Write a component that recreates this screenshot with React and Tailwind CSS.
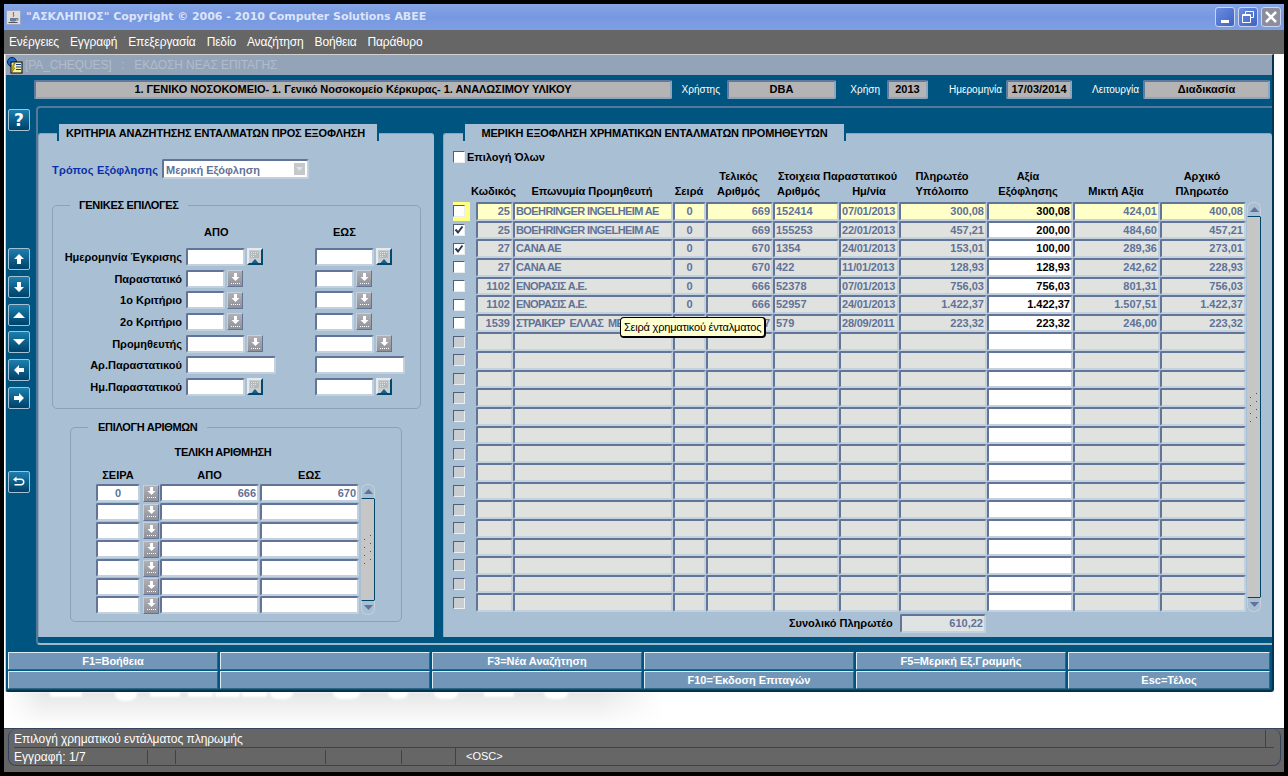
import React from 'react';

const greek = { fontFamily: '"Liberation Sans", "DejaVu Sans", sans-serif' };

const rows = [
  ['25', 'BOEHRINGER INGELHEIM AE', '0', '669', '152414', '07/01/2013', '300,08', '300,08', '424,01', '400,08'],
  ['25', 'BOEHRINGER INGELHEIM AE', '0', '669', '155253', '22/01/2013', '457,21', '200,00', '484,60', '457,21'],
  ['27', 'CANA AE', '0', '670', '1354', '24/01/2013', '153,01', '100,00', '289,36', '273,01'],
  ['27', 'CANA AE', '0', '670', '422', '11/01/2013', '128,93', '128,93', '242,62', '228,93'],
  ['1102', 'ΕΝΟΡΑΣΙΣ Α.Ε.', '0', '666', '52378', '07/01/2013', '756,03', '756,03', '801,31', '756,03'],
  ['1102', 'ΕΝΟΡΑΣΙΣ Α.Ε.', '0', '666', '52957', '24/01/2013', '1.422,37', '1.422,37', '1.507,51', '1.422,37'],
  ['1539', 'ΣΤΡΑΙΚΕΡ  ΕΛΛΑΣ  ΜΕΠΕ', '0', '667', '579', '28/09/2011', '223,32', '223,32', '246,00', '223,32'],
];

const colWidths = ['w-[37px]', 'w-[160px] tracking-[-0.6px]', 'w-[33px]', 'w-[67px]', 'w-[66px]', 'w-[60px] tracking-[-0.2px]', 'w-[88px]', 'w-[86px]', 'w-[87px]', 'w-[86px]'];
const colAlign = ['text-right', 'text-left', 'text-center', 'text-right', 'text-left', 'text-left', 'text-right', 'text-right', 'text-right', 'text-right'];

function Field({ className = '', children, align = 'text-right', bg = 'bg-white', color = 'text-[#5f7298]' }) {
  return (
    <div className={`shrink-0 overflow-hidden whitespace-pre rounded-[2px] border-2 border-t-[#627599] border-l-[#627599] border-r-[#c3d0de] border-b-[#c3d0de] px-[1px] text-[11px] font-bold leading-[14px] ${bg} ${color} ${align} ${className}`}>
      {children}
    </div>
  );
}

function SideButton({ children, className = '' }) {
  return (
    <div className={`flex h-[22px] w-[22px] items-center justify-center rounded-[2px] border border-[#a8c0d4] bg-gradient-to-b from-[#1d7fae] to-[#00426a] ${className}`}>
      {children}
    </div>
  );
}

function SideIcon({ children }) {
  return <svg width="14" height="14" viewBox="0 0 14 14" fill="#fff">{children}</svg>;
}

function ListButton({ className = '' }) {
  return (
    <div className={`flex h-[17px] w-[16px] shrink-0 flex-col items-center justify-center border border-t-[#c3d0de] border-l-[#c3d0de] border-r-[#627599] border-b-[#627599] bg-gradient-to-b from-[#b0b0b6] to-[#909098] ${className}`}>
      <svg width="11" height="12" viewBox="0 0 11 12" fill="#fff">
        <path d="M4 0h3v4h2.500L5.500 8 1.500 4H4z" />
        <path d="M1 10h1v1H1zM3 10h1v1H3zM5 10h1v1H5zM7 10h1v1H7zM9 10h1v1H9z" />
      </svg>
    </div>
  );
}

function CalButton({ className = '' }) {
  return (
    <div className={`flex h-[17px] w-[16px] shrink-0 items-center justify-center overflow-hidden border-2 border-t-[#e4eaf0] border-l-[#e4eaf0] border-r-[#004a70] border-b-[#004a70] bg-[#c9cfd0] ${className}`}>
      <svg width="12" height="13" viewBox="0 0 12 13">
        <rect x="1" y="1" width="9" height="7" fill="#b4babc" />
        <path d="M2 2h1v1H2zM4 2h1v1H4zM6 2h1v1H6zM8 2h1v1H8zM2 4h1v1H2zM4 4h1v1H4zM6 4h1v1H6zM2 6h1v1H2zM4 6h1v1H4z" fill="#dfe3e4" />
        <path d="M2.500 13 L6 9 L9.500 13z" fill="#1d5f86" />
      </svg>
    </div>
  );
}

function Check({ checked, disabled, highlight }) {
  return (
    <div className={`flex h-full w-[17px] shrink-0 items-center justify-start ${highlight ? 'bg-[#ffff80]' : ''}`}>
      <div className={`flex h-[12px] w-[12px] items-center justify-center border border-t-[#51607a] border-l-[#51607a] border-r-[#e8eef2] border-b-[#e8eef2] ${disabled ? 'bg-[#c9cdd0]' : 'bg-white'}`}>
        {checked && (
          <svg width="10" height="10" viewBox="0 0 10 10">
            <path d="M1.500 4.500 L4 7.500 L8.500 1.500" fill="none" stroke="#2a3a55" strokeWidth="2" />
          </svg>
        )}
      </div>
    </div>
  );
}

function GroupBox({ title, titleClass = '', className = '', children }) {
  return (
    <div className={`relative rounded-[5px] border border-[#8ca2b8] ${className}`}>
      <div className={`absolute top-[-8px] whitespace-nowrap bg-[#a9bfd3] text-[11px] font-bold leading-[14px] tracking-[-0.3px] text-black ${titleClass}`}>{title}</div>
      {children}
    </div>
  );
}

function TabPanel({ title, tabClass, className = '', children }) {
  return (
    <div className={`relative rounded-t-[3px] border-t border-l border-[#8fa6ba] bg-[#a9bfd3] ${className}`}>
      <div className={`absolute top-[-10px] flex h-[17px] items-center whitespace-nowrap border-x-2 border-[#005580] bg-[#a9bfd3] pt-[1px] text-[11px] font-bold tracking-[-0.15px] text-black ${tabClass}`}>
        {title}
      </div>
      {children}
    </div>
  );
}

function FilterRow({ label, first, second }) {
  return (
    <div className="flex h-[21.700px] items-center">
      <div className="w-[133px] shrink-0 whitespace-nowrap pr-[4px] text-right text-[11px] font-bold leading-[14px] text-black">{label}</div>
      <div className="flex w-[129px] shrink-0 items-center gap-[2px]">{first}</div>
      <div className="flex items-center gap-[2px]">{second}</div>
    </div>
  );
}

function Scrollbar({ className = '' }) {
  return (
    <div className={`flex shrink-0 flex-col overflow-hidden rounded-[6px] bg-[#c6c6c6] ${className}`}>
      <div className="flex h-[15px] items-center justify-center rounded-t-[6px] border border-b-[#00466b] border-[#c3d0de] bg-[#a9bfd3]">
        <svg width="9" height="5" viewBox="0 0 9 5"><path d="M4.500 0 L9 5 H0z" fill="#5f7298" /></svg>
      </div>
      <div className="flex flex-1 flex-col items-center justify-center gap-[3px] border-r border-[#00466b]">
        {[0, 1, 2, 3].map((i) => (
          <svg key={i} width="8" height="5" viewBox="0 0 8 5"><path d="M0 4h1v1H0zM6 0h1v1H6z" fill="#3f5070" /></svg>
        ))}
      </div>
      <div className="flex h-[15px] items-center justify-center rounded-b-[6px] border border-t-[#00466b] border-[#c3d0de] bg-[#a9bfd3]">
        <svg width="9" height="5" viewBox="0 0 9 5"><path d="M4.500 5 L9 0 H0z" fill="#5f7298" /></svg>
      </div>
    </div>
  );
}

function HeaderCell({ className = '', children }) {
  return <div className={`shrink-0 text-center text-[11px] font-bold leading-[15px] text-black ${className}`}>{children}</div>;
}

function BottomButton({ children }) {
  return (
    <div className="flex h-[18px] items-center justify-center rounded-[1px] border border-t-[#e2ecf4] border-l-[#e2ecf4] border-r-[#2f6486] border-b-[#2f6486] bg-[#7196b8] text-[11px] font-bold text-white">
      {children}
    </div>
  );
}

function TopInfo({ label, value, width, labelWidth, gap }) {
  return (
    <div className="flex items-center">
      <div className={`text-right text-[10px] leading-[14px] text-white ${labelWidth}`}>{label}</div>
      <div className={`flex h-[19px] items-center justify-center rounded-[2px] border-2 border-t-[#5f7a9c] border-l-[#5f7a9c] border-r-[#8da6bf] border-b-[#8da6bf] bg-[#b4b4b4] text-[11px] font-bold text-black ${gap} ${width}`}>{value}</div>
    </div>
  );
}

function Ghost() {
  // faded logo reflection under the form
  return (
    <svg className="blur-[1px]" width="660" height="36" viewBox="0 0 660 36">
      <defs>
        <linearGradient id="ghost" x1="0" y1="0" x2="0" y2="1">
          <stop offset="0" stopColor="#e6e6e6" />
          <stop offset="1" stopColor="#ffffff" />
        </linearGradient>
        <linearGradient id="fade" x1="0" y1="0" x2="1" y2="0">
          <stop offset="0" stopColor="#fff" stopOpacity="1" />
          <stop offset="0.06" stopColor="#fff" stopOpacity="0" />
          <stop offset="0.9" stopColor="#fff" stopOpacity="0" />
          <stop offset="1" stopColor="#fff" stopOpacity="1" />
        </linearGradient>
      </defs>
      <rect width="660" height="36" fill="url(#ghost)" />
      <rect width="660" height="36" fill="url(#fade)" />
      <g fill="#fff">
        <rect x="46" y="-4" width="32" height="9" rx="2" />
        <rect x="111" y="-4" width="22" height="13" rx="10" />
        <rect x="146" y="-4" width="30" height="9" rx="2" />
        <rect x="184" y="-4" width="25" height="9" rx="2" />
        <rect x="211" y="-4" width="25" height="9" rx="2" />
        <rect x="238" y="-4" width="25" height="9" rx="2" />
        <rect x="266" y="-4" width="23" height="11" rx="10" />
        <rect x="329" y="-4" width="27" height="11" rx="10" />
        <rect x="384" y="-4" width="20" height="11" rx="10" />
        <rect x="430" y="-4" width="24" height="11" rx="10" />
        <rect x="480" y="-4" width="30" height="9" rx="2" />
        <rect x="540" y="-4" width="24" height="11" rx="10" />
      </g>
    </svg>
  );
}

export default function App() {
  const filters = [
    ['Ημερομηνία Έγκρισης', 'w-[59px]', 'cal', 'w-[59px]'],
    ['Παραστατικό', 'w-[39px]', 'list', 'w-[39px]'],
    ['1ο Κριτήριο', 'w-[39px]', 'list', 'w-[39px]'],
    ['2ο Κριτήριο', 'w-[39px]', 'list', 'w-[39px]'],
    ['Προμηθευτής', 'w-[59px]', 'list', 'w-[59px]'],
    ['Αρ.Παραστατικού', 'w-[90px]', null, 'w-[90px]'],
    ['Ημ.Παραστατικού', 'w-[59px]', 'cal', 'w-[59px]'],
  ];

  return (
    <div className="flex h-[776px] w-[1288px] flex-col overflow-hidden bg-black py-[4px] px-[4px] text-[11px]" style={greek}>
      {/* title bar */}
      <div className="flex h-[26px] shrink-0 items-center bg-gradient-to-b from-[#86a5e6] via-[#7797e0] to-[#7f9fe4] pl-[2px] pr-[3px]">
        <div className="flex h-[15px] w-[15px] items-center justify-center border border-[#9aa8c8] bg-[#dcdcdc]">
          <svg width="13" height="13" viewBox="0 0 13 13">
            <path d="M3 7h6v2.500l-1 1H4l-1-1z" fill="#6a7a9a" />
            <path d="M9 7.500h2v1.500H9" fill="none" stroke="#6a7a9a" />
            <path d="M6 1c1.500 1-.5 2 .5 3s-.5 1.500-.5 2" fill="none" stroke="#b03020" />
            <path d="M1.500 11.500h9" stroke="#555" />
          </svg>
        </div>
        <div className="ml-[5px] whitespace-nowrap text-[11px] font-bold tracking-[-0.05px] text-[#dbe5f8]" style={{ fontFamily: '"DejaVu Sans", sans-serif' }}>
          "ΑΣΚΛΗΠΙΟΣ" Copyright © 2006 - 2010 Computer Solutions ABEE
        </div>
        <div className="ml-auto flex gap-[3px]">
          <div className="flex h-[20px] w-[20px] items-end justify-center rounded-[3px] border border-[#c8d6f0] bg-gradient-to-br from-[#6c8ee0] to-[#3f62c4] pb-[3px]"><div className="h-[3px] w-[8px] bg-white" /></div>
          <div className="flex h-[20px] w-[20px] items-center justify-center rounded-[3px] border border-[#c8d6f0] bg-gradient-to-br from-[#6c8ee0] to-[#3f62c4]">
            <svg width="12" height="12" viewBox="0 0 12 12" fill="none" stroke="#fff"><path d="M3.500 3V.5h8v6H9M.5 3.500h8v8h-8z" /><path d="M1 4h7" strokeWidth="2" /></svg>
          </div>
          <div className="flex h-[20px] w-[20px] items-center justify-center rounded-[3px] border border-[#c8d6f0] bg-[#8d8d9c]">
            <svg width="12" height="12" viewBox="0 0 12 12"><path d="M1 1l10 10M11 1L1 11" stroke="#fff" strokeWidth="2.500" /></svg>
          </div>
        </div>
      </div>
      {/* menu */}
      <div className="flex h-[24px] shrink-0 items-center gap-[11px] bg-[#666666] pl-[5px] text-[12px] tracking-[-0.15px] text-white">
        {['Ενέργειες', 'Εγγραφή', 'Επεξεργασία', 'Πεδίο', 'Αναζήτηση', 'Βοήθεια', 'Παράθυρο'].map((m) => (
          <span key={m}>{m}</span>
        ))}
      </div>
      {/* client area */}
      <div className="flex min-h-0 flex-1 flex-col bg-white">
        <div className="ml-[1px] flex h-[638px] w-[1269px] shrink-0 flex-col overflow-hidden rounded-b-[3px] border-t border-r-2 border-b-2 border-l border-t-[#d0d0d0] border-r-[#00344f] border-b-[#00344f] border-l-[#c0d0dc] bg-[#005580]">
          {/* inner title */}
          <div className="flex h-[20px] shrink-0 items-center bg-[#94a4b8] text-[12px] tracking-[-0.1px] text-[#b0bccc]">
            <svg width="17" height="17" viewBox="0 0 17 17">
              <circle cx="6" cy="5" r="4.500" fill="#1a6ad0" stroke="#0a2050" />
              <rect x="5" y="5" width="11" height="11" fill="#f4f0a0" stroke="#000" />
              <path d="M10 7.500h5M10 10h5M10 12.500h5" stroke="#1a3a90" />
              <path d="M8 6l1 0-2 5 2 0-3 4 1-3-2 0z" fill="#d8c020" stroke="#5a5000" strokeWidth="0.500" />
            </svg>
            <span className="ml-[2px] whitespace-pre">[PA_CHEQUES]   :   ΕΚΔΟΣΗ ΝΕΑΣ ΕΠΙΤΑΓΗΣ</span>
          </div>
          {/* info strip */}
          <div className="flex h-[31px] shrink-0 items-start pt-[5px] pl-[28px]">
            <div className="flex h-[19px] w-[638px] items-center justify-center rounded-[2px] border-2 border-t-[#5f7a9c] border-l-[#5f7a9c] border-r-[#8da6bf] border-b-[#8da6bf] bg-[#b4b4b4] text-[11px] font-bold tracking-[-0.05px] text-black">
              1. ΓΕΝΙΚΟ ΝΟΣΟΚΟΜΕΙΟ- 1. Γενικό Νοσοκομείο Κέρκυρας- 1. ΑΝΑΛΩΣΙΜΟΥ ΥΛΙΚΟΥ
            </div>
            <TopInfo label="Χρήστης" value="DBA" labelWidth="w-[48px]" gap="ml-[7px]" width="w-[109px]" />
            <TopInfo label="Χρήση" value="2013" labelWidth="w-[44px]" gap="ml-[7px]" width="w-[41px]" />
            <TopInfo label="Ημερομηνία" value="17/03/2014" labelWidth="w-[74px]" gap="ml-[4px]" width="w-[66px]" />
            <TopInfo label="Λειτουργία" value="Διαδικασία" labelWidth="w-[67px]" gap="ml-[4px]" width="w-[127px]" />
          </div>
          {/* work area */}
          <div className="flex min-h-0 flex-1">
            <div className="flex w-[30px] shrink-0 flex-col items-start pt-[3px] pl-[2px]">
              <SideButton><span className="text-[17px] font-bold leading-none text-white" style={{ fontFamily: '"DejaVu Sans", sans-serif' }}>?</span></SideButton>
              <SideButton className="mt-[117px]"><SideIcon><path d="M7 2l5 5H9v5H5V7H2z" /></SideIcon></SideButton>
              <SideButton className="mt-[6px]"><SideIcon><path d="M5 2h4v5h3l-5 5-5-5h3z" /></SideIcon></SideButton>
              <SideButton className="mt-[6px]"><SideIcon><path d="M7 4l6 6H1z" /></SideIcon></SideButton>
              <SideButton className="mt-[5px]"><SideIcon><path d="M1 4h12l-6 6z" /></SideIcon></SideButton>
              <SideButton className="mt-[6px]"><SideIcon><path d="M2 7l5-5v3h5v4H7v3z" /></SideIcon></SideButton>
              <SideButton className="mt-[6px]"><SideIcon><path d="M12 7L7 2v3H2v4h5v3z" /></SideIcon></SideButton>
              <SideButton className="mt-[62px]"><SideIcon><path d="M1 4.500L4.500 1.500V3.500H9c2 0 3.500 1.500 3.500 3.500S11 10.500 9 10.500H2.500V9H9c1.200 0 2-.9 2-2s-.8-2-2-2H4.500V7z" /></SideIcon></SideButton>
            </div>
            <div className="flex min-w-0 flex-1 gap-[9px] rounded-l-[4px] border-t-2 border-b-2 border-l-2 border-t-[#56789a] border-b-[#a3b6c6] border-l-[#56789a] pt-[25px] pb-[6px]">
              {/* left panel */}
              <TabPanel title="ΚΡΙΤΗΡΙΑ ΑΝΑΖΗΤΗΣΗΣ ΕΝΤΑΛΜΑΤΩΝ ΠΡΟΣ ΕΞΟΦΛΗΣΗ" tabClass="left-[18px] w-[322px] pl-[7px]" className="h-[504px] w-[396px] shrink-0">
                <div className="flex items-center pt-[25px] pl-[13px]">
                  <span className="pt-[1px] text-[11px] font-bold leading-[14px] tracking-[0.2px] text-[#0a2fa8]">Τρόπος Εξόφλησης</span>
                  <Field className="ml-[4px] flex h-[20px] w-[147px] items-center justify-between pr-[2px] pl-[2px]" align="text-left">
                    <span className="pt-[1px]">Μερική Εξόφληση</span>
                    <span className="flex h-[12px] w-[11px] items-center justify-center bg-[#c4c8cc]">
                      <svg width="7" height="4" viewBox="0 0 7 4"><path d="M0 0h7L3.500 4z" fill="#dfe3e6" /></svg>
                    </span>
                  </Field>
                </div>
                <GroupBox title="ΓΕΝΙΚΕΣ ΕΠΙΛΟΓΕΣ" titleClass="left-[17px] px-[9px]" className="mt-[26px] ml-[13px] h-[204px] w-[369px]">
                  <div className="flex pt-[19px] text-[11px] font-bold leading-[14px] text-black">
                    <div className="w-[133px]" />
                    <div className="w-[129px] pl-[18px]">ΑΠΟ</div>
                    <div className="pl-[18px]">ΕΩΣ</div>
                  </div>
                  <div className="mt-[7px] flex flex-col">
                    {filters.map(([label, w, btn, w2]) => (
                      <FilterRow
                        key={label}
                        label={label}
                        first={<><Field className={`h-[18px] ${w}`} />{btn === 'cal' && <CalButton />}{btn === 'list' && <ListButton />}</>}
                        second={<><Field className={`h-[18px] ${w2}`} />{btn === 'cal' && <CalButton />}{btn === 'list' && <ListButton />}</>}
                      />
                    ))}
                  </div>
                </GroupBox>
                <GroupBox title="ΕΠΙΛΟΓΗ ΑΡΙΘΜΩΝ" titleClass="left-[17px] px-[10px]" className="mt-[18px] ml-[31px] h-[195px] w-[332px]">
                  <div className="pt-[17px] pr-[26px] text-center text-[11px] font-bold leading-[14px] tracking-[-0.3px] text-black">ΤΕΛΙΚΗ ΑΡΙΘΜΗΣΗ</div>
                  <div className="mt-[9px] flex pl-[25px] text-center text-[11px] font-bold leading-[14px] text-black">
                    <div className="w-[44px]">ΣΕΙΡΑ</div>
                    <div className="ml-[20px] w-[99px]">ΑΠΟ</div>
                    <div className="ml-[1px] w-[99px]">ΕΩΣ</div>
                  </div>
                  <div className="mt-[2px] flex pl-[25px]">
                    <div className="flex flex-col">
                      {[0, 1, 2, 3, 4, 5, 6].map((i) => (
                        <div key={i} className="flex h-[18.700px] items-center">
                          <Field className="h-[18px] w-[44px]" align="text-center">{i === 0 ? '0' : ''}</Field>
                          <ListButton className="ml-[3px]" />
                          <Field className="ml-[1px] h-[18px] w-[99px]">{i === 0 ? '666' : ''}</Field>
                          <Field className="ml-[1px] h-[18px] w-[99px]">{i === 0 ? '670' : ''}</Field>
                        </div>
                      ))}
                    </div>
                    <Scrollbar className="ml-[2px] w-[14px]" />
                  </div>
                </GroupBox>
              </TabPanel>
              {/* right panel */}
              <TabPanel title="ΜΕΡΙΚΗ ΕΞΟΦΛΗΣΗ ΧΡΗΜΑΤΙΚΩΝ ΕΝΤΑΛΜΑΤΩΝ ΠΡΟΜΗΘΕΥΤΩΝ" tabClass="left-[19px] w-[383px] justify-center" className="h-[504px] w-[829px] shrink-0">
                <div className="flex items-center pt-[16px] pl-[9px] text-[11px] font-bold leading-[14px] text-black">
                  <div className="h-[12px] w-[12px] border border-t-[#51607a] border-l-[#51607a] border-r-[#e8eef2] border-b-[#e8eef2] bg-white" />
                  <span className="ml-[2px]">Επιλογή Όλων</span>
                </div>
                {/* grid header */}
                <div className="mt-[5px] flex h-[30px] items-end pl-[27px]">
                  <HeaderCell className="w-[45px]">Κωδικός</HeaderCell>
                  <HeaderCell className="w-[152px]">Επωνυμία Προμηθευτή</HeaderCell>
                  <HeaderCell className="w-[42px]">Σειρά</HeaderCell>
                  <HeaderCell className="w-[57px]">Τελικός<br />Αριθμός</HeaderCell>
                  <div className="flex w-[141px] shrink-0 flex-col text-center text-[11px] font-bold leading-[15px] text-black">
                    <div className="whitespace-nowrap">Στοιχεια Παραστατικού</div>
                    <div className="flex"><span className="w-[63px]">Αριθμός</span><span className="w-[78px]">Ημ/νία</span></div>
                  </div>
                  <HeaderCell className="w-[68px]">Πληρωτέο<br />Υπόλοιπο</HeaderCell>
                  <HeaderCell className="w-[104px]">Αξία<br />Εξόφλησης</HeaderCell>
                  <HeaderCell className="w-[72px]">Μικτή Αξία</HeaderCell>
                  <HeaderCell className="w-[100px]">Αρχικό<br />Πληρωτέο</HeaderCell>
                </div>
                {/* grid rows */}
                <div className="relative mt-[3px] flex pl-[9px]">
                  <div className="flex h-[410px] flex-col">
                    {Array.from({ length: 22 }).map((_, r) => {
                      const row = rows[r];
                      const current = r === 0;
                      return (
                        <div key={r} className="flex min-h-0 flex-1 items-stretch">
                          <Check checked={r === 1 || r === 2} disabled={!row} highlight={current} />
                          <div className="w-[6px] shrink-0" />
                          {colWidths.map((w, c) => {
                            let bg = current ? 'bg-[#ffffc8]' : 'bg-[#e0e2df]';
                            let color = 'text-[#5f7298]';
                            if (c === 7) {
                              if (!current) bg = 'bg-white';
                              color = 'text-black';
                            }
                            return (
                              <Field key={c} className={w} align={colAlign[c]} bg={bg} color={color}>
                                {row ? row[c] : ''}
                              </Field>
                            );
                          })}
                        </div>
                      );
                    })}
                  </div>
                  <Scrollbar className="ml-[1px] w-[14px]" />
                  <div className="absolute top-[115px] left-[176px] z-10 whitespace-nowrap rounded-[4px] border border-r-2 border-b-2 border-black bg-[#ffffd0] px-[3px] py-[2px] text-[11px] leading-[14px] tracking-[-0.2px] text-black">
                    Σειρά χρηματικού ένταλματος
                  </div>
                </div>
                {/* total */}
                <div className="mt-[2px] flex items-center pl-[345px]">
                  <span className="w-[104px] whitespace-nowrap text-[11px] font-bold text-black">Συνολικό Πληρωτέο</span>
                  <Field className="ml-[7px] h-[19px] w-[86px]" bg="bg-[#dfe3e4]">610,22</Field>
                </div>
              </TabPanel>
            </div>
          </div>
          {/* function keys */}
          <div className="grid shrink-0 grid-cols-[repeat(5,210px)_202px] gap-x-[2px] gap-y-[1px] pt-[7px] pb-[1px] pl-[2px]">
            {['F1=Βοήθεια', '', 'F3=Νέα Αναζήτηση', '', 'F5=Μερική Εξ.Γραμμής', '', '', '', '', 'F10=Έκδοση Επιταγών', '', 'Esc=Τέλος'].map((t, i) => (
              <BottomButton key={i}>{t}</BottomButton>
            ))}
          </div>
        </div>
        <div className="min-h-0 flex-1 overflow-hidden">
          <Ghost />
        </div>
        {/* status bar */}
        <div className="h-[44px] shrink-0 border-t border-[#33445c] bg-[#666666] text-[12px] text-white">
          <div className="mr-[3px] ml-[4px] h-[37px] rounded-[8px] border-r border-b border-l border-[#33445c]">
            <div className="mr-[6px] ml-[5px] flex h-[19px] items-center border-b border-[#33445c] pt-[1px]">
              <span className="tracking-[-0.05px]">Επιλογή χρηματικού εντάλματος πληρωμής</span>
              <span className="mr-[8px] ml-auto h-full border-l border-[#33445c]" />
            </div>
            <div className="ml-[5px] flex h-[17px] items-center">
              <span className="w-[133px]">Εγγραφή: 1/7</span>
              <span className="h-[14px] w-[28px] border-l border-[#33445c]" />
              <span className="h-[14px] w-[150px] border-l border-[#33445c]" />
              <span className="h-[14px] w-[76px] border-l border-[#33445c]" />
              <span className="h-[14px] w-[54px] border-l border-[#33445c]" />
              <span className="border-l border-[#33445c] pl-[10px] text-[11px]">&lt;OSC&gt;</span>
            </div>
          </div>
        </div>
      </div>
    </div>
  );
}
